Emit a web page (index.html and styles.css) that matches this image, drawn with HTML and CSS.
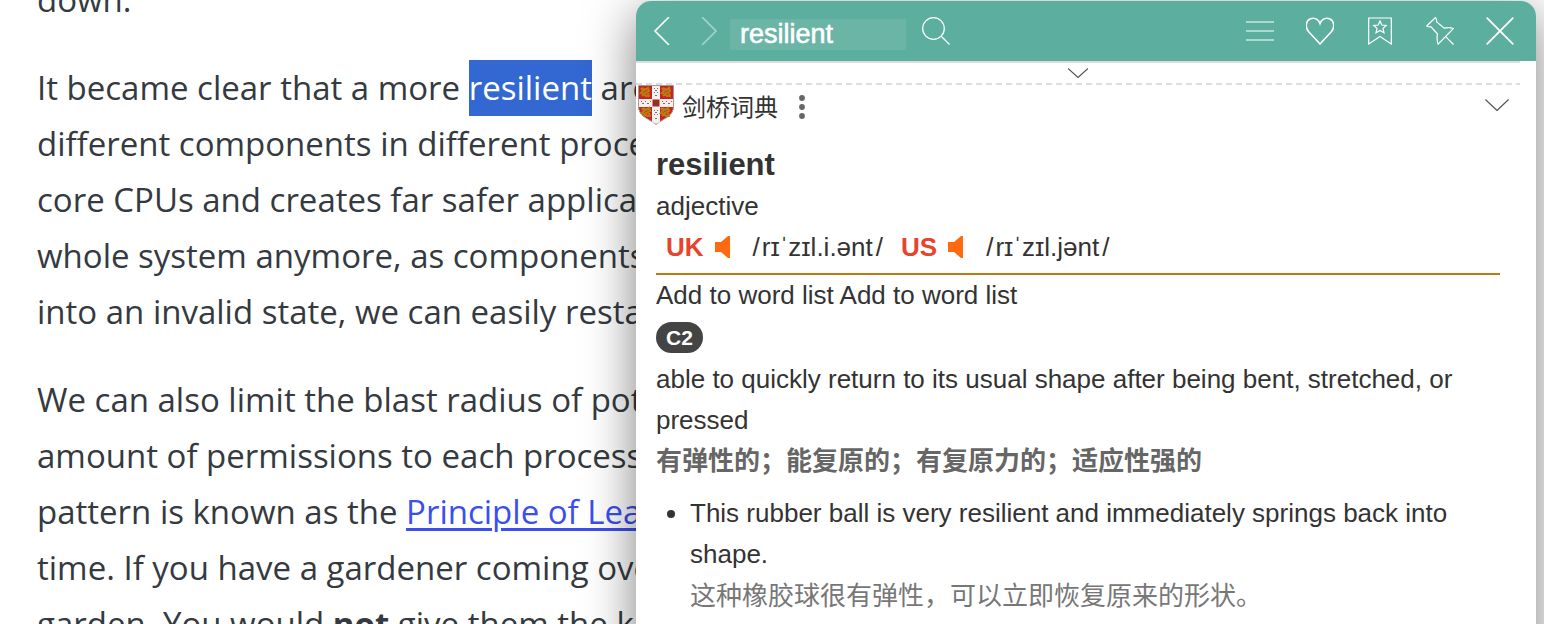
FILE: index.html
```html
<!DOCTYPE html>
<html lang="en">
<head>
<meta charset="utf-8">
<title>Dictionary popup</title>
<link rel="stylesheet" href="styles.css">
</head>
<body>
<main class="article">
  <p>down.</p>
  <p>It became clear that a more <mark>resilient</mark> arc<br>
  different components in different proce<br>
  core CPUs and creates far safer applicat<br>
  whole system anymore, as components<br>
  into an invalid state, we can easily resta</p>
  <p>We can also limit the blast radius of pot<br>
  amount of permissions to each process<br>
  pattern is known as the <a href="#">Principle of Leas</a><br>
  time. If you have a gardener coming ove<br>
  garden. You would <strong>not</strong> give them the k</p>
</main>

<aside class="popup" aria-label="Dictionary">
  <header class="toolbar">
    <button class="tool" aria-label="Back"><svg width="28" height="28" viewBox="0 0 28 28"><path d="M21 0L7 14l14 14" stroke-width="1.6"/></svg></button>
    <button class="tool next" aria-label="Forward" disabled><svg width="28" height="28" viewBox="0 0 28 28"><path d="M6 0l14 14L6 28" stroke-width="1.6"/></svg></button>
    <input class="query" type="text" value="resilient" aria-label="Search word">
    <button class="tool search" aria-label="Search"><svg width="28" height="28" viewBox="0 0 28 28"><circle cx="11.500" cy="11.500" r="10.800"/><path d="M19 19l8.500 8.500"/></svg></button>
    <div class="actions">
      <button class="tool" aria-label="Menu"><svg width="28" height="28" viewBox="0 0 28 28"><path d="M0 5h28M0 14h28M0 23h28" stroke-width="2" opacity=".5"/></svg></button>
      <button class="tool" aria-label="Favorite"><svg width="28" height="28" viewBox="0 0 28 28"><path d="M14 27L2.500 14.500C-1 10-.3 4 4 2 8 .2 12.500 2 14 6.500 15.500 2 20 .2 24 2c4.300 2 5 8 1.500 12.500z" stroke-width="1.600"/></svg></button>
      <button class="tool" aria-label="Notebook"><svg width="28" height="28" viewBox="0 0 28 28"><path d="M2.700 1h22.600v26L14 19.500 2.700 27z"/><path d="M14 4l1.800 4 4.500.4-3.300 3 1 4.300-4-2.300-4 2.300 1-4.300-3.300-3 4.500-.4z"/></svg></button>
      <button class="tool" aria-label="Pin"><svg width="28" height="28" viewBox="0 0 28 28"><path d="M9.500.5L.7 9c2 1.200 3.600 1 4.300.8l6.500 7.200c-.8 3.500-.5 7 .6 10.200L27.500 11.500c-3.500-1.200-6-1.200-9.300-.4L10.500 4.800c.3-1.500 0-3-1-4.300zM19.700 19.700l7.800 7.800"/></svg></button>
      <button class="tool" aria-label="Close"><svg width="28" height="28" viewBox="0 0 28 28"><path d="M.7.7l26.600 26.600M27.300.7L.7 27.300" stroke-width="1.800"/></svg></button>
    </div>
  </header>

  <div class="content">
    <button class="expand" aria-label="Expand"><svg width="20" height="10" viewBox="0 0 20 10"><path d="M0 .5l10 9 10-9"/></svg></button>
    <section>
      <div class="source">
        <svg class="crest" width="36" height="40" viewBox="0 0 36 40">
          <path d="M.5.5h35v21c0 9-9 12-14 15.500L18 39.500 14.500 37C9.500 33.500.5 30.500.5 21.500z" fill="#cf1f25" stroke="#a39a92"/>
          <path d="M14 1h8v13h13v8H22v15l-4 2-4-2V22H1v-8h13z" fill="#f4f0ef"/>
          <path d="M14.500 14.500h7v7h-7z" fill="#b51f20"/><path d="M16 16h4v4h-4z" fill="#764020"/>
          <g fill="none" stroke="#ba7b12" stroke-width="2.200">
            <path id="lion" d="M3 3l2 3-2 2 3 1 2 2 3-1M4 11l3-3 4-2-1-3-3 2-3-2m6 5l1 4"/>
            <use href="#lion" x="21"/><use href="#lion" x="1" y="20"/><use href="#lion" x="20" y="20"/>
          </g>
          <g fill="#77716e"><path d="M16 3h1v1h-1zm3 0h1v1h-1zm-2 2h2v1h-2zm-1 2h1v1h-1zm3 0h1v1h-1zm-2 3h2v1h-2zM16 25h1v1h-1zm3 0h1v1h-1zm-2 2h2v1h-2zm-1 2h1v1h-1zm3 0h1v1h-1zm-2 4h2v1h-2zM3 16h1v1H3zm1 2h2v1H4zm3-2h1v1H7zm2 2h2v1H9zm3-2h1v1h-1zM24 16h1v1h-1zm1 2h2v1h-2zm3-2h1v1h-1zm2 2h2v1h-2zm3-2h1v1h-1z"/></g>
        </svg>
        <span class="source-name" lang="zh">剑桥词典</span>
        <button class="more" aria-label="More options"><svg width="6" height="24" viewBox="0 0 6 24"><circle cx="3" cy="3" r="2.900"/><circle cx="3" cy="12" r="2.900"/><circle cx="3" cy="21" r="2.900"/></svg></button>
        <button class="collapse" aria-label="Collapse"><svg width="24" height="12" viewBox="0 0 24 12"><path d="M.4.500L12 11.500 23.600.500"/></svg></button>
      </div>
      <article class="entry">
        <h1>resilient</h1>
        <p>adjective</p>
        <div class="pronunciations">
          <b>UK</b>
          <button class="sound" aria-label="Play UK pronunciation"><svg width="16" height="22" viewBox="0 0 16 22"><path d="M0 6h6l7-6h2v22h-2l-7-6H0z"/></svg></button>
          <span class="ipa">/<i>rɪˈzɪl.i.ənt</i>/</span>
          <b>US</b>
          <button class="sound" aria-label="Play US pronunciation"><svg width="16" height="22" viewBox="0 0 16 22"><path d="M0 6h6l7-6h2v22h-2l-7-6H0z"/></svg></button>
          <span class="ipa">/<i>rɪˈzɪl.jənt</i>/</span>
        </div>
        <p>Add to word list Add to word list</p>
        <div class="level"><span>C2</span></div>
        <p>able to quickly return to its usual shape after being bent, stretched, or pressed</p>
        <p class="translation" lang="zh">有弹性的；能复原的；有复原力的；适应性强的</p>
        <ul>
          <li>This rubber ball is very resilient and immediately springs back into shape.
            <span class="example" lang="zh">这种橡胶球很有弹性，可以立即恢复原来的形状。</span></li>
        </ul>
      </article>
    </section>
  </div>
</aside>
</body>
</html>
```
FILE: styles.css
```css
* { box-sizing: border-box; }
body {
  margin: 0;
  height: 100vh;
  overflow: hidden;
  position: relative;
  background: #fff;
  font-family: "Liberation Sans", "Noto Sans CJK SC", sans-serif;
}
button {
  display: flex;
  align-items: center;
  justify-content: center;
  padding: 0;
  border: 0;
  background: none;
}
svg { display: block; flex: none; }

.article {
  margin-top: -28px;
  padding-left: 37px;
  color: #343a40;
  font: 33px/56px "Open Sans", "Noto Sans", sans-serif;
  white-space: nowrap;
}
.article p { margin: 0 0 32px; }
.article mark { display: inline-block; background: #3367d1; color: #fff; }
.article a { color: #3b4ef0; text-decoration-thickness: 3px; text-underline-offset: 4px; }

.popup {
  position: absolute;
  top: 1px;
  right: 8px;
  bottom: -60px;
  left: 636px;
  border-radius: 15px 15px 0 0;
  background: #fff;
  box-shadow: 0 12px 50px rgba(0, 0, 0, .5);
}
.toolbar {
  display: flex;
  align-items: center;
  height: 60px;
  padding: 0 20px 0 10px;
  border-radius: 15px 15px 0 0;
  background: #5cae9f;
}
.tool { width: 32px; height: 32px; }
.tool svg { fill: none; stroke: #fff; stroke-width: 1.2; }
.next { margin-left: 16px; opacity: .45; }
.query {
  width: 176px;
  height: 31px;
  margin: 6px 14px 0 4px;
  padding: 0 10px;
  border: 0;
  background: #6bb5a7;
  color: #fff;
  font: 27px/31px "Liberation Sans", sans-serif;
  -webkit-text-stroke: thin #fff;
}
.actions { display: flex; gap: 28px; margin-left: auto; }

.content {
  margin-right: 16px;
  border-top: 2px solid #ddd;
}
.expand { width: 100%; height: 20px; }
.expand svg, .collapse svg { fill: none; stroke: #555; stroke-width: 1.2; }
.content section {
  background: repeating-linear-gradient(90deg, #ddd 0 6px, transparent 6px 10px) 0 0 / 100% 2px no-repeat;
}
.source {
  display: flex;
  align-items: center;
  height: 42px;
  padding: 1px 11px 0 2px;
}
.source-name {
  margin-left: 8px;
  padding-top: 6px;
  color: #333;
  font-size: 24px;
  line-height: 36px;
}
.more { width: 24px; height: 32px; margin-left: 12px; padding-top: 4px; }
.more svg { fill: #666; }
.collapse { margin-left: auto; }

.entry {
  padding: 19px 20px 0;
  color: #333;
  font-size: 26px;
  line-height: 41px;
}
.entry h1 { margin: 0; font-size: 31px; line-height: 42px; }
.entry p { margin: 0; }
.pronunciations {
  display: flex;
  align-items: center;
  height: 48px;
  padding: 0 10px 6px;
  border-bottom: 2px solid #c47711;
  white-space: nowrap;
}
.pronunciations b { color: #e8442d; }
.sound { width: 16px; margin: 0 22px 0 11px; }
.sound svg { fill: #ff6a10; }
.ipa { margin-right: 18px; }
.ipa i { margin: 0 3px 0 2px; font-style: normal; }
.level { display: flex; align-items: center; height: 43px; }
.level span {
  padding: 0 10px;
  border-radius: 16px;
  background: #444;
  color: #fff;
  font-size: 21px;
  font-weight: 700;
  line-height: 31px;
}
.entry .translation { color: #666; font-weight: 700; }
.entry ul { margin: 11px 0 0; padding-left: 34px; }
.example { display: block; padding-top: 1px; color: #777; }
```
